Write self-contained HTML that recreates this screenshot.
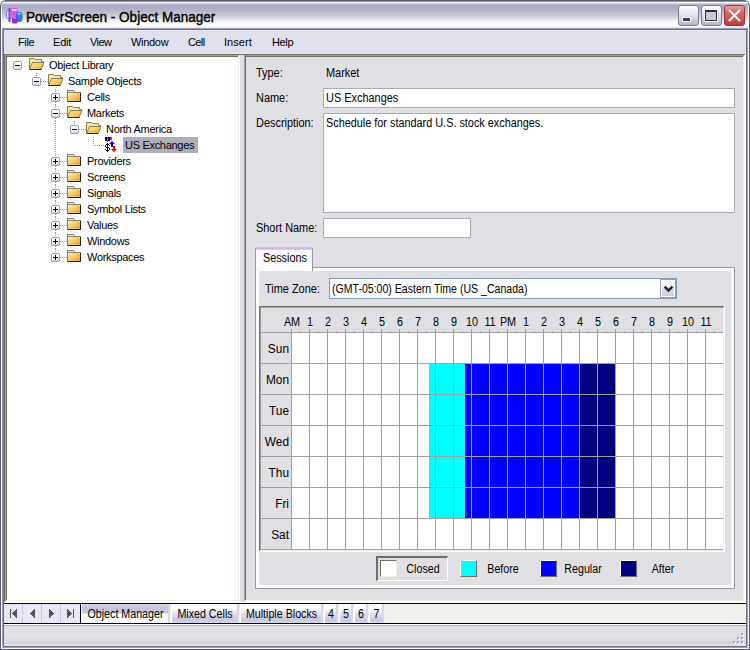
<!DOCTYPE html>
<html><head><meta charset="utf-8"><style>
html,body{margin:0;padding:0;width:750px;height:650px;overflow:hidden;background:#e0dfe3}
#w{position:relative;width:750px;height:650px;overflow:hidden}
#w div{position:absolute}
.t{font-family:"Liberation Sans",sans-serif;white-space:pre;color:#000}
</style></head><body><div id="w">
<svg width="0" height="0" style="position:absolute"><defs>
<linearGradient id="bx" x1="0" y1="0" x2="0" y2="1"><stop offset="0" stop-color="#ffffff"/><stop offset="0.55" stop-color="#f6f6fa"/><stop offset="1" stop-color="#d0d4e2"/></linearGradient>
<linearGradient id="fo" x1="0" y1="0" x2="1" y2="1"><stop offset="0" stop-color="#fff0a0"/><stop offset="1" stop-color="#e8a828"/></linearGradient>
<linearGradient id="fc" x1="0" y1="0" x2="1" y2="1"><stop offset="0" stop-color="#fff4b0"/><stop offset="1" stop-color="#e8a020"/></linearGradient>
</defs></svg>
<div style="left:0px;top:0px;width:750px;height:650px;background:#ffffff;"></div>
<div style="left:0px;top:0px;width:750px;height:650px;background:#5c5c78;border-radius:6px 6px 0 0"></div>
<div style="left:1px;top:1px;width:748px;height:649px;background:#ffffff;border-radius:5px 5px 0 0"></div>
<div style="left:1px;top:1px;width:748px;height:29px;background:linear-gradient(#9090a8 0px,#9090a8 1px,#ffffff 1px,#ffffff 2px,#e0e0e8 2px,#c0c0d4 3px,#b0b0c8 4px,#a9a9c4 5px,#b0b0c8 8px,#bcbccc 11px,#c8c8d4 14px,#dadae2 17px,#ececf2 19px,#f6f6f9 21px,#ffffff 24px,#ffffff 26px,#ececec 26px,#ececec 27px,#a0a0b8 27px,#a0a0b8 28px,#6c6c88 28px,#6c6c88 29px);border-radius:5px 5px 0 0"></div>
<svg style="position:absolute;left:5px;top:6px" width="18" height="18" viewBox="0 0 18 18" shape-rendering="crispEdges"><g shape-rendering="geometricPrecision">
<rect x="1.5" y="4.5" width="5" height="8" rx="1.5" fill="#ece4fc" stroke="#9878d8"/>
<rect x="3.5" y="2" width="2" height="14" fill="#6848e0"/>
<rect x="6" y="2" width="7" height="8.5" rx="2" fill="#e850e8"/>
<rect x="7" y="3" width="5" height="2" rx="1" fill="#fcc8fc"/>
<rect x="11.5" y="6.5" width="5.5" height="9" rx="2" fill="#2888e8" stroke="#1868c8" stroke-width="0.8"/>
<rect x="12.5" y="7" width="3.5" height="1.5" rx="0.7" fill="#90d0ff"/>
<rect x="7" y="10.5" width="5.5" height="7" rx="1.5" fill="#9028d0"/>
<rect x="8" y="11" width="3" height="1.5" fill="#d090f8"/>
</g></svg>
<div class="t" style="left:26px;top:10px;font-size:14px;line-height:15px;color:#000;font-weight:400;letter-spacing:0px;-webkit-text-stroke:0.4px #000;transform:scaleX(0.965);transform-origin:0 0">PowerScreen - Object Manager</div>
<div style="left:678px;top:5px;width:21px;height:21px;background:linear-gradient(#fdfdff,#e6e6f0 40%,#c4c4d8 85%,#b4b4cc);border:1px solid #7d7d9e;border-radius:3px;box-sizing:border-box"></div>
<div style="left:701px;top:5px;width:21px;height:21px;background:linear-gradient(#fdfdff,#e6e6f0 40%,#c4c4d8 85%,#b4b4cc);border:1px solid #7d7d9e;border-radius:3px;box-sizing:border-box"></div>
<div style="left:683px;top:18px;width:7px;height:3px;background:#3c3c58;outline:1px solid #fff"></div>
<div style="left:705px;top:10px;width:12px;height:11px;border:1px solid #2c2c44;border-top-width:2px;box-sizing:border-box;background:#c8c8dc;outline:1px solid #fff"></div>
<div style="left:724px;top:5px;width:21px;height:21px;background:linear-gradient(#f0a0a0,#e06868 30%,#c84848 85%,#c03838);border:1px solid #a03030;border-radius:3px;box-sizing:border-box"></div>
<svg style="position:absolute;left:724px;top:5px" width="21" height="21" viewBox="0 0 21 21" shape-rendering="crispEdges"><path d="M5 5 L16 16 M16 5 L5 16" stroke="#fff" stroke-width="2" shape-rendering="geometricPrecision"/></svg>
<div style="left:1px;top:6px;width:1px;height:644px;background:#ffffff;"></div>
<div style="left:2px;top:28px;width:1px;height:618px;background:#9a9ab2;"></div>
<div style="left:3px;top:29px;width:1px;height:617px;background:#6e6e8c;"></div>
<div style="left:748px;top:6px;width:1px;height:644px;background:#ffffff;"></div>
<div style="left:747px;top:28px;width:1px;height:618px;background:#9a9ab2;"></div>
<div style="left:746px;top:29px;width:1px;height:617px;background:#6e6e8c;"></div>
<div style="left:0px;top:649px;width:750px;height:1px;background:#5c5c78;"></div>
<div style="left:1px;top:648px;width:748px;height:1px;background:#ffffff;"></div>
<div style="left:2px;top:647px;width:746px;height:1px;background:#9a9ab2;"></div>
<div style="left:3px;top:646px;width:744px;height:1px;background:#6e6e8c;"></div>
<div style="left:4px;top:30px;width:742px;height:24px;background:#dfe0ea;"></div>
<div style="left:4px;top:30px;width:742px;height:1px;background:#eaeaf6;"></div>
<div style="left:4px;top:30px;width:1px;height:24px;background:#eaeaf6;"></div>
<div style="left:4px;top:53px;width:742px;height:1px;background:#eaeaf6;"></div>
<div class="t" style="left:18px;top:36px;font-size:11px;line-height:13px;color:#000;font-weight:400;letter-spacing:-0.35px;">File</div>
<div class="t" style="left:53px;top:36px;font-size:11px;line-height:13px;color:#000;font-weight:400;letter-spacing:-0.2px;">Edit</div>
<div class="t" style="left:90px;top:36px;font-size:11px;line-height:13px;color:#000;font-weight:400;letter-spacing:-0.55px;">View</div>
<div class="t" style="left:131px;top:36px;font-size:11px;line-height:13px;color:#000;font-weight:400;letter-spacing:-0.3px;">Window</div>
<div class="t" style="left:188px;top:36px;font-size:11px;line-height:13px;color:#000;font-weight:400;letter-spacing:-0.6px;">Cell</div>
<div class="t" style="left:224px;top:36px;font-size:11px;line-height:13px;color:#000;font-weight:400;letter-spacing:0.05px;">Insert</div>
<div class="t" style="left:272px;top:36px;font-size:11px;line-height:13px;color:#000;font-weight:400;letter-spacing:-0.35px;">Help</div>
<div style="left:4px;top:54px;width:236px;height:548px;background:#716f64;"></div>
<div style="left:5px;top:55px;width:234px;height:546px;background:#a0a0a4;"></div>
<div style="left:6px;top:56px;width:233px;height:545px;background:#716f64;"></div>
<div style="left:7px;top:57px;width:232px;height:544px;background:#ffffff;"></div>
<div style="left:238px;top:56px;width:1px;height:545px;background:#f1efe2;"></div>
<div style="left:6px;top:600px;width:233px;height:1px;background:#f1efe2;"></div>
<div style="left:239px;top:55px;width:1px;height:547px;background:#ffffff;"></div>
<div style="left:5px;top:601px;width:235px;height:1px;background:#ffffff;"></div>
<div style="left:240px;top:54px;width:4px;height:548px;background:#e0dfe3;"></div>
<div style="left:4px;top:54px;width:742px;height:1px;background:#716f64;"></div>
<div style="left:244px;top:54px;width:502px;height:548px;background:#e0dfe3;"></div>
<div style="left:244px;top:54px;width:502px;height:1px;background:#716f64;"></div>
<div style="left:244px;top:55px;width:1px;height:547px;background:#a0a0a4;"></div>
<div style="left:245px;top:55px;width:500px;height:1px;background:#a0a0a4;"></div>
<div style="left:245px;top:55px;width:1px;height:547px;background:#716f64;"></div>
<div style="left:246px;top:56px;width:499px;height:1px;background:#716f64;"></div>
<div style="left:745px;top:54px;width:1px;height:548px;background:#ffffff;"></div>
<div style="left:744px;top:55px;width:1px;height:547px;background:#ffffff;"></div>
<div style="left:743px;top:56px;width:1px;height:546px;background:#f1efe2;"></div>
<div style="left:244px;top:601px;width:502px;height:1px;background:#ffffff;"></div>
<div style="left:245px;top:600px;width:500px;height:1px;background:#f1efe2;"></div>
<div style="left:4px;top:602px;width:742px;height:1px;background:#ffffff;"></div>
<div style="left:36px;top:73px;width:1px;height:1px;background:#a0a0a0;"></div>
<div style="left:36px;top:75px;width:1px;height:1px;background:#a0a0a0;"></div>
<div style="left:55px;top:89px;width:1px;height:1px;background:#a0a0a0;"></div>
<div style="left:55px;top:91px;width:1px;height:1px;background:#a0a0a0;"></div>
<div style="left:55px;top:102px;width:1px;height:1px;background:#a0a0a0;"></div>
<div style="left:55px;top:104px;width:1px;height:1px;background:#a0a0a0;"></div>
<div style="left:55px;top:105px;width:1px;height:1px;background:#a0a0a0;"></div>
<div style="left:55px;top:107px;width:1px;height:1px;background:#a0a0a0;"></div>
<div style="left:55px;top:118px;width:1px;height:1px;background:#a0a0a0;"></div>
<div style="left:55px;top:120px;width:1px;height:1px;background:#a0a0a0;"></div>
<div style="left:55px;top:121px;width:1px;height:1px;background:#a0a0a0;"></div>
<div style="left:55px;top:123px;width:1px;height:1px;background:#a0a0a0;"></div>
<div style="left:55px;top:125px;width:1px;height:1px;background:#a0a0a0;"></div>
<div style="left:55px;top:127px;width:1px;height:1px;background:#a0a0a0;"></div>
<div style="left:55px;top:129px;width:1px;height:1px;background:#a0a0a0;"></div>
<div style="left:55px;top:131px;width:1px;height:1px;background:#a0a0a0;"></div>
<div style="left:55px;top:133px;width:1px;height:1px;background:#a0a0a0;"></div>
<div style="left:55px;top:135px;width:1px;height:1px;background:#a0a0a0;"></div>
<div style="left:55px;top:137px;width:1px;height:1px;background:#a0a0a0;"></div>
<div style="left:55px;top:139px;width:1px;height:1px;background:#a0a0a0;"></div>
<div style="left:55px;top:141px;width:1px;height:1px;background:#a0a0a0;"></div>
<div style="left:55px;top:143px;width:1px;height:1px;background:#a0a0a0;"></div>
<div style="left:55px;top:145px;width:1px;height:1px;background:#a0a0a0;"></div>
<div style="left:55px;top:147px;width:1px;height:1px;background:#a0a0a0;"></div>
<div style="left:55px;top:149px;width:1px;height:1px;background:#a0a0a0;"></div>
<div style="left:55px;top:151px;width:1px;height:1px;background:#a0a0a0;"></div>
<div style="left:55px;top:153px;width:1px;height:1px;background:#a0a0a0;"></div>
<div style="left:55px;top:155px;width:1px;height:1px;background:#a0a0a0;"></div>
<div style="left:55px;top:166px;width:1px;height:1px;background:#a0a0a0;"></div>
<div style="left:55px;top:168px;width:1px;height:1px;background:#a0a0a0;"></div>
<div style="left:55px;top:169px;width:1px;height:1px;background:#a0a0a0;"></div>
<div style="left:55px;top:171px;width:1px;height:1px;background:#a0a0a0;"></div>
<div style="left:55px;top:182px;width:1px;height:1px;background:#a0a0a0;"></div>
<div style="left:55px;top:184px;width:1px;height:1px;background:#a0a0a0;"></div>
<div style="left:55px;top:185px;width:1px;height:1px;background:#a0a0a0;"></div>
<div style="left:55px;top:187px;width:1px;height:1px;background:#a0a0a0;"></div>
<div style="left:55px;top:198px;width:1px;height:1px;background:#a0a0a0;"></div>
<div style="left:55px;top:200px;width:1px;height:1px;background:#a0a0a0;"></div>
<div style="left:55px;top:201px;width:1px;height:1px;background:#a0a0a0;"></div>
<div style="left:55px;top:203px;width:1px;height:1px;background:#a0a0a0;"></div>
<div style="left:55px;top:214px;width:1px;height:1px;background:#a0a0a0;"></div>
<div style="left:55px;top:216px;width:1px;height:1px;background:#a0a0a0;"></div>
<div style="left:55px;top:217px;width:1px;height:1px;background:#a0a0a0;"></div>
<div style="left:55px;top:219px;width:1px;height:1px;background:#a0a0a0;"></div>
<div style="left:55px;top:230px;width:1px;height:1px;background:#a0a0a0;"></div>
<div style="left:55px;top:232px;width:1px;height:1px;background:#a0a0a0;"></div>
<div style="left:55px;top:233px;width:1px;height:1px;background:#a0a0a0;"></div>
<div style="left:55px;top:235px;width:1px;height:1px;background:#a0a0a0;"></div>
<div style="left:55px;top:246px;width:1px;height:1px;background:#a0a0a0;"></div>
<div style="left:55px;top:248px;width:1px;height:1px;background:#a0a0a0;"></div>
<div style="left:55px;top:249px;width:1px;height:1px;background:#a0a0a0;"></div>
<div style="left:55px;top:251px;width:1px;height:1px;background:#a0a0a0;"></div>
<div style="left:74px;top:121px;width:1px;height:1px;background:#a0a0a0;"></div>
<div style="left:74px;top:123px;width:1px;height:1px;background:#a0a0a0;"></div>
<div style="left:93px;top:137px;width:1px;height:1px;background:#a0a0a0;"></div>
<div style="left:93px;top:139px;width:1px;height:1px;background:#a0a0a0;"></div>
<div style="left:93px;top:141px;width:1px;height:1px;background:#a0a0a0;"></div>
<div style="left:93px;top:143px;width:1px;height:1px;background:#a0a0a0;"></div>
<div style="left:93px;top:145px;width:1px;height:1px;background:#a0a0a0;"></div>
<svg style="position:absolute;left:13px;top:61px" width="9" height="9" viewBox="0 0 9 9" shape-rendering="crispEdges"><rect x="1" y="1" width="7" height="7" fill="url(#bx)"/><rect x="1" y="0" width="7" height="1" fill="#9a9eb2"/><rect x="1" y="8" width="7" height="1" fill="#9a9eb2"/><rect x="0" y="1" width="1" height="7" fill="#9a9eb2"/><rect x="8" y="1" width="1" height="7" fill="#9a9eb2"/><rect x="2" y="4" width="5" height="1" fill="#000"/></svg>
<svg style="position:absolute;left:29px;top:57px" width="16" height="14" viewBox="0 0 16 14" shape-rendering="crispEdges"><path d="M0.5 1.5 h5 l1 1 h6 v2 h2 l-3 8 h-11 z" fill="#f8e8a0" stroke="#8c7c58" shape-rendering="geometricPrecision"/>
<path d="M3.5 5.5 h11.5 l-3 7 h-11.5 z" fill="url(#fo)" stroke="#8c7c58" shape-rendering="geometricPrecision"/>
<path d="M1 12.5 h11.5" stroke="#302818" shape-rendering="geometricPrecision"/></svg>
<div class="t" style="left:49px;top:59px;font-size:11px;line-height:13px;color:#000;font-weight:400;letter-spacing:-0.3px;">Object Library</div>
<div style="left:41px;top:81px;width:1px;height:1px;background:#a0a0a0;"></div>
<div style="left:43px;top:81px;width:1px;height:1px;background:#a0a0a0;"></div>
<div style="left:45px;top:81px;width:1px;height:1px;background:#a0a0a0;"></div>
<div style="left:47px;top:81px;width:1px;height:1px;background:#a0a0a0;"></div>
<svg style="position:absolute;left:32px;top:77px" width="9" height="9" viewBox="0 0 9 9" shape-rendering="crispEdges"><rect x="1" y="1" width="7" height="7" fill="url(#bx)"/><rect x="1" y="0" width="7" height="1" fill="#9a9eb2"/><rect x="1" y="8" width="7" height="1" fill="#9a9eb2"/><rect x="0" y="1" width="1" height="7" fill="#9a9eb2"/><rect x="8" y="1" width="1" height="7" fill="#9a9eb2"/><rect x="2" y="4" width="5" height="1" fill="#000"/></svg>
<svg style="position:absolute;left:48px;top:73px" width="16" height="14" viewBox="0 0 16 14" shape-rendering="crispEdges"><path d="M0.5 1.5 h5 l1 1 h6 v2 h2 l-3 8 h-11 z" fill="#f8e8a0" stroke="#8c7c58" shape-rendering="geometricPrecision"/>
<path d="M3.5 5.5 h11.5 l-3 7 h-11.5 z" fill="url(#fo)" stroke="#8c7c58" shape-rendering="geometricPrecision"/>
<path d="M1 12.5 h11.5" stroke="#302818" shape-rendering="geometricPrecision"/></svg>
<div class="t" style="left:68px;top:75px;font-size:11px;line-height:13px;color:#000;font-weight:400;letter-spacing:-0.3px;">Sample Objects</div>
<div style="left:60px;top:97px;width:1px;height:1px;background:#a0a0a0;"></div>
<div style="left:62px;top:97px;width:1px;height:1px;background:#a0a0a0;"></div>
<div style="left:64px;top:97px;width:1px;height:1px;background:#a0a0a0;"></div>
<div style="left:66px;top:97px;width:1px;height:1px;background:#a0a0a0;"></div>
<svg style="position:absolute;left:51px;top:93px" width="9" height="9" viewBox="0 0 9 9" shape-rendering="crispEdges"><rect x="1" y="1" width="7" height="7" fill="url(#bx)"/><rect x="1" y="0" width="7" height="1" fill="#9a9eb2"/><rect x="1" y="8" width="7" height="1" fill="#9a9eb2"/><rect x="0" y="1" width="1" height="7" fill="#9a9eb2"/><rect x="8" y="1" width="1" height="7" fill="#9a9eb2"/><rect x="2" y="4" width="5" height="1" fill="#000"/><rect x="4" y="2" width="1" height="5" fill="#000"/></svg>
<svg style="position:absolute;left:67px;top:90px" width="14" height="12" viewBox="0 0 14 12" shape-rendering="crispEdges"><rect x="0" y="0" width="7" height="1" fill="#8a7e68"/><rect x="0" y="1" width="1" height="11" fill="#8a7e68"/>
<rect x="1" y="1" width="6" height="1" fill="#fff0a8"/><rect x="7" y="1" width="1" height="1" fill="#8a7e68"/>
<rect x="1" y="2" width="13" height="1" fill="#8a7e68"/><rect x="1" y="3" width="12" height="8" fill="url(#fc)"/>
<rect x="13" y="3" width="1" height="9" fill="#2c2418"/><rect x="1" y="11" width="13" height="1" fill="#2c2418"/></svg>
<div class="t" style="left:87px;top:91px;font-size:11px;line-height:13px;color:#000;font-weight:400;letter-spacing:-0.3px;">Cells</div>
<div style="left:60px;top:113px;width:1px;height:1px;background:#a0a0a0;"></div>
<div style="left:62px;top:113px;width:1px;height:1px;background:#a0a0a0;"></div>
<div style="left:64px;top:113px;width:1px;height:1px;background:#a0a0a0;"></div>
<div style="left:66px;top:113px;width:1px;height:1px;background:#a0a0a0;"></div>
<svg style="position:absolute;left:51px;top:109px" width="9" height="9" viewBox="0 0 9 9" shape-rendering="crispEdges"><rect x="1" y="1" width="7" height="7" fill="url(#bx)"/><rect x="1" y="0" width="7" height="1" fill="#9a9eb2"/><rect x="1" y="8" width="7" height="1" fill="#9a9eb2"/><rect x="0" y="1" width="1" height="7" fill="#9a9eb2"/><rect x="8" y="1" width="1" height="7" fill="#9a9eb2"/><rect x="2" y="4" width="5" height="1" fill="#000"/></svg>
<svg style="position:absolute;left:67px;top:105px" width="16" height="14" viewBox="0 0 16 14" shape-rendering="crispEdges"><path d="M0.5 1.5 h5 l1 1 h6 v2 h2 l-3 8 h-11 z" fill="#f8e8a0" stroke="#8c7c58" shape-rendering="geometricPrecision"/>
<path d="M3.5 5.5 h11.5 l-3 7 h-11.5 z" fill="url(#fo)" stroke="#8c7c58" shape-rendering="geometricPrecision"/>
<path d="M1 12.5 h11.5" stroke="#302818" shape-rendering="geometricPrecision"/></svg>
<div class="t" style="left:87px;top:107px;font-size:11px;line-height:13px;color:#000;font-weight:400;letter-spacing:-0.3px;">Markets</div>
<div style="left:79px;top:129px;width:1px;height:1px;background:#a0a0a0;"></div>
<div style="left:81px;top:129px;width:1px;height:1px;background:#a0a0a0;"></div>
<div style="left:83px;top:129px;width:1px;height:1px;background:#a0a0a0;"></div>
<div style="left:85px;top:129px;width:1px;height:1px;background:#a0a0a0;"></div>
<svg style="position:absolute;left:70px;top:125px" width="9" height="9" viewBox="0 0 9 9" shape-rendering="crispEdges"><rect x="1" y="1" width="7" height="7" fill="url(#bx)"/><rect x="1" y="0" width="7" height="1" fill="#9a9eb2"/><rect x="1" y="8" width="7" height="1" fill="#9a9eb2"/><rect x="0" y="1" width="1" height="7" fill="#9a9eb2"/><rect x="8" y="1" width="1" height="7" fill="#9a9eb2"/><rect x="2" y="4" width="5" height="1" fill="#000"/></svg>
<svg style="position:absolute;left:86px;top:121px" width="16" height="14" viewBox="0 0 16 14" shape-rendering="crispEdges"><path d="M0.5 1.5 h5 l1 1 h6 v2 h2 l-3 8 h-11 z" fill="#f8e8a0" stroke="#8c7c58" shape-rendering="geometricPrecision"/>
<path d="M3.5 5.5 h11.5 l-3 7 h-11.5 z" fill="url(#fo)" stroke="#8c7c58" shape-rendering="geometricPrecision"/>
<path d="M1 12.5 h11.5" stroke="#302818" shape-rendering="geometricPrecision"/></svg>
<div class="t" style="left:106px;top:123px;font-size:11px;line-height:13px;color:#000;font-weight:400;letter-spacing:-0.3px;">North America</div>
<div style="left:95px;top:145px;width:1px;height:1px;background:#a0a0a0;"></div>
<div style="left:97px;top:145px;width:1px;height:1px;background:#a0a0a0;"></div>
<div style="left:99px;top:145px;width:1px;height:1px;background:#a0a0a0;"></div>
<div style="left:101px;top:145px;width:1px;height:1px;background:#a0a0a0;"></div>
<div style="left:103px;top:145px;width:1px;height:1px;background:#a0a0a0;"></div>
<svg style="position:absolute;left:105px;top:137px" width="12" height="16" viewBox="0 0 12 16" shape-rendering="crispEdges">
<rect x="0" y="0" width="2" height="4" fill="#000080"/><rect x="2" y="0" width="1" height="5" fill="#1070e0"/>
<rect x="3" y="0" width="2" height="4" fill="#000080"/><rect x="5" y="0" width="2" height="3" fill="#ff0080"/>
<path d="M7 4 L10 7 L8 7 L8 10 L6 10 L6 7 L4 7 Z" fill="#0000ff" shape-rendering="geometricPrecision"/>
<path d="M8 9 L10 9 L10 12 L12 12 L9 15 L6 12 L8 12 Z" fill="#ff0000" shape-rendering="geometricPrecision"/>
<rect x="2" y="6" width="1" height="9" fill="#000"/><rect x="1" y="7" width="3" height="1" fill="#000"/><rect x="0" y="8" width="1" height="2" fill="#000"/><rect x="4" y="8" width="1" height="1" fill="#000"/><rect x="1" y="10" width="3" height="1" fill="#000"/><rect x="4" y="11" width="1" height="2" fill="#000"/><rect x="0" y="12" width="1" height="1" fill="#000"/><rect x="1" y="13" width="3" height="1" fill="#000"/></svg>
<div style="left:123px;top:137px;width:75px;height:16px;background:#adaebb;"></div>
<div class="t" style="left:125px;top:139px;font-size:11px;line-height:13px;color:#000;font-weight:400;letter-spacing:-0.3px;">US Exchanges</div>
<div style="left:60px;top:161px;width:1px;height:1px;background:#a0a0a0;"></div>
<div style="left:62px;top:161px;width:1px;height:1px;background:#a0a0a0;"></div>
<div style="left:64px;top:161px;width:1px;height:1px;background:#a0a0a0;"></div>
<div style="left:66px;top:161px;width:1px;height:1px;background:#a0a0a0;"></div>
<svg style="position:absolute;left:51px;top:157px" width="9" height="9" viewBox="0 0 9 9" shape-rendering="crispEdges"><rect x="1" y="1" width="7" height="7" fill="url(#bx)"/><rect x="1" y="0" width="7" height="1" fill="#9a9eb2"/><rect x="1" y="8" width="7" height="1" fill="#9a9eb2"/><rect x="0" y="1" width="1" height="7" fill="#9a9eb2"/><rect x="8" y="1" width="1" height="7" fill="#9a9eb2"/><rect x="2" y="4" width="5" height="1" fill="#000"/><rect x="4" y="2" width="1" height="5" fill="#000"/></svg>
<svg style="position:absolute;left:67px;top:154px" width="14" height="12" viewBox="0 0 14 12" shape-rendering="crispEdges"><rect x="0" y="0" width="7" height="1" fill="#8a7e68"/><rect x="0" y="1" width="1" height="11" fill="#8a7e68"/>
<rect x="1" y="1" width="6" height="1" fill="#fff0a8"/><rect x="7" y="1" width="1" height="1" fill="#8a7e68"/>
<rect x="1" y="2" width="13" height="1" fill="#8a7e68"/><rect x="1" y="3" width="12" height="8" fill="url(#fc)"/>
<rect x="13" y="3" width="1" height="9" fill="#2c2418"/><rect x="1" y="11" width="13" height="1" fill="#2c2418"/></svg>
<div class="t" style="left:87px;top:155px;font-size:11px;line-height:13px;color:#000;font-weight:400;letter-spacing:-0.3px;">Providers</div>
<div style="left:60px;top:177px;width:1px;height:1px;background:#a0a0a0;"></div>
<div style="left:62px;top:177px;width:1px;height:1px;background:#a0a0a0;"></div>
<div style="left:64px;top:177px;width:1px;height:1px;background:#a0a0a0;"></div>
<div style="left:66px;top:177px;width:1px;height:1px;background:#a0a0a0;"></div>
<svg style="position:absolute;left:51px;top:173px" width="9" height="9" viewBox="0 0 9 9" shape-rendering="crispEdges"><rect x="1" y="1" width="7" height="7" fill="url(#bx)"/><rect x="1" y="0" width="7" height="1" fill="#9a9eb2"/><rect x="1" y="8" width="7" height="1" fill="#9a9eb2"/><rect x="0" y="1" width="1" height="7" fill="#9a9eb2"/><rect x="8" y="1" width="1" height="7" fill="#9a9eb2"/><rect x="2" y="4" width="5" height="1" fill="#000"/><rect x="4" y="2" width="1" height="5" fill="#000"/></svg>
<svg style="position:absolute;left:67px;top:170px" width="14" height="12" viewBox="0 0 14 12" shape-rendering="crispEdges"><rect x="0" y="0" width="7" height="1" fill="#8a7e68"/><rect x="0" y="1" width="1" height="11" fill="#8a7e68"/>
<rect x="1" y="1" width="6" height="1" fill="#fff0a8"/><rect x="7" y="1" width="1" height="1" fill="#8a7e68"/>
<rect x="1" y="2" width="13" height="1" fill="#8a7e68"/><rect x="1" y="3" width="12" height="8" fill="url(#fc)"/>
<rect x="13" y="3" width="1" height="9" fill="#2c2418"/><rect x="1" y="11" width="13" height="1" fill="#2c2418"/></svg>
<div class="t" style="left:87px;top:171px;font-size:11px;line-height:13px;color:#000;font-weight:400;letter-spacing:-0.3px;">Screens</div>
<div style="left:60px;top:193px;width:1px;height:1px;background:#a0a0a0;"></div>
<div style="left:62px;top:193px;width:1px;height:1px;background:#a0a0a0;"></div>
<div style="left:64px;top:193px;width:1px;height:1px;background:#a0a0a0;"></div>
<div style="left:66px;top:193px;width:1px;height:1px;background:#a0a0a0;"></div>
<svg style="position:absolute;left:51px;top:189px" width="9" height="9" viewBox="0 0 9 9" shape-rendering="crispEdges"><rect x="1" y="1" width="7" height="7" fill="url(#bx)"/><rect x="1" y="0" width="7" height="1" fill="#9a9eb2"/><rect x="1" y="8" width="7" height="1" fill="#9a9eb2"/><rect x="0" y="1" width="1" height="7" fill="#9a9eb2"/><rect x="8" y="1" width="1" height="7" fill="#9a9eb2"/><rect x="2" y="4" width="5" height="1" fill="#000"/><rect x="4" y="2" width="1" height="5" fill="#000"/></svg>
<svg style="position:absolute;left:67px;top:186px" width="14" height="12" viewBox="0 0 14 12" shape-rendering="crispEdges"><rect x="0" y="0" width="7" height="1" fill="#8a7e68"/><rect x="0" y="1" width="1" height="11" fill="#8a7e68"/>
<rect x="1" y="1" width="6" height="1" fill="#fff0a8"/><rect x="7" y="1" width="1" height="1" fill="#8a7e68"/>
<rect x="1" y="2" width="13" height="1" fill="#8a7e68"/><rect x="1" y="3" width="12" height="8" fill="url(#fc)"/>
<rect x="13" y="3" width="1" height="9" fill="#2c2418"/><rect x="1" y="11" width="13" height="1" fill="#2c2418"/></svg>
<div class="t" style="left:87px;top:187px;font-size:11px;line-height:13px;color:#000;font-weight:400;letter-spacing:-0.3px;">Signals</div>
<div style="left:60px;top:209px;width:1px;height:1px;background:#a0a0a0;"></div>
<div style="left:62px;top:209px;width:1px;height:1px;background:#a0a0a0;"></div>
<div style="left:64px;top:209px;width:1px;height:1px;background:#a0a0a0;"></div>
<div style="left:66px;top:209px;width:1px;height:1px;background:#a0a0a0;"></div>
<svg style="position:absolute;left:51px;top:205px" width="9" height="9" viewBox="0 0 9 9" shape-rendering="crispEdges"><rect x="1" y="1" width="7" height="7" fill="url(#bx)"/><rect x="1" y="0" width="7" height="1" fill="#9a9eb2"/><rect x="1" y="8" width="7" height="1" fill="#9a9eb2"/><rect x="0" y="1" width="1" height="7" fill="#9a9eb2"/><rect x="8" y="1" width="1" height="7" fill="#9a9eb2"/><rect x="2" y="4" width="5" height="1" fill="#000"/><rect x="4" y="2" width="1" height="5" fill="#000"/></svg>
<svg style="position:absolute;left:67px;top:202px" width="14" height="12" viewBox="0 0 14 12" shape-rendering="crispEdges"><rect x="0" y="0" width="7" height="1" fill="#8a7e68"/><rect x="0" y="1" width="1" height="11" fill="#8a7e68"/>
<rect x="1" y="1" width="6" height="1" fill="#fff0a8"/><rect x="7" y="1" width="1" height="1" fill="#8a7e68"/>
<rect x="1" y="2" width="13" height="1" fill="#8a7e68"/><rect x="1" y="3" width="12" height="8" fill="url(#fc)"/>
<rect x="13" y="3" width="1" height="9" fill="#2c2418"/><rect x="1" y="11" width="13" height="1" fill="#2c2418"/></svg>
<div class="t" style="left:87px;top:203px;font-size:11px;line-height:13px;color:#000;font-weight:400;letter-spacing:-0.3px;">Symbol Lists</div>
<div style="left:60px;top:225px;width:1px;height:1px;background:#a0a0a0;"></div>
<div style="left:62px;top:225px;width:1px;height:1px;background:#a0a0a0;"></div>
<div style="left:64px;top:225px;width:1px;height:1px;background:#a0a0a0;"></div>
<div style="left:66px;top:225px;width:1px;height:1px;background:#a0a0a0;"></div>
<svg style="position:absolute;left:51px;top:221px" width="9" height="9" viewBox="0 0 9 9" shape-rendering="crispEdges"><rect x="1" y="1" width="7" height="7" fill="url(#bx)"/><rect x="1" y="0" width="7" height="1" fill="#9a9eb2"/><rect x="1" y="8" width="7" height="1" fill="#9a9eb2"/><rect x="0" y="1" width="1" height="7" fill="#9a9eb2"/><rect x="8" y="1" width="1" height="7" fill="#9a9eb2"/><rect x="2" y="4" width="5" height="1" fill="#000"/><rect x="4" y="2" width="1" height="5" fill="#000"/></svg>
<svg style="position:absolute;left:67px;top:218px" width="14" height="12" viewBox="0 0 14 12" shape-rendering="crispEdges"><rect x="0" y="0" width="7" height="1" fill="#8a7e68"/><rect x="0" y="1" width="1" height="11" fill="#8a7e68"/>
<rect x="1" y="1" width="6" height="1" fill="#fff0a8"/><rect x="7" y="1" width="1" height="1" fill="#8a7e68"/>
<rect x="1" y="2" width="13" height="1" fill="#8a7e68"/><rect x="1" y="3" width="12" height="8" fill="url(#fc)"/>
<rect x="13" y="3" width="1" height="9" fill="#2c2418"/><rect x="1" y="11" width="13" height="1" fill="#2c2418"/></svg>
<div class="t" style="left:87px;top:219px;font-size:11px;line-height:13px;color:#000;font-weight:400;letter-spacing:-0.3px;">Values</div>
<div style="left:60px;top:241px;width:1px;height:1px;background:#a0a0a0;"></div>
<div style="left:62px;top:241px;width:1px;height:1px;background:#a0a0a0;"></div>
<div style="left:64px;top:241px;width:1px;height:1px;background:#a0a0a0;"></div>
<div style="left:66px;top:241px;width:1px;height:1px;background:#a0a0a0;"></div>
<svg style="position:absolute;left:51px;top:237px" width="9" height="9" viewBox="0 0 9 9" shape-rendering="crispEdges"><rect x="1" y="1" width="7" height="7" fill="url(#bx)"/><rect x="1" y="0" width="7" height="1" fill="#9a9eb2"/><rect x="1" y="8" width="7" height="1" fill="#9a9eb2"/><rect x="0" y="1" width="1" height="7" fill="#9a9eb2"/><rect x="8" y="1" width="1" height="7" fill="#9a9eb2"/><rect x="2" y="4" width="5" height="1" fill="#000"/><rect x="4" y="2" width="1" height="5" fill="#000"/></svg>
<svg style="position:absolute;left:67px;top:234px" width="14" height="12" viewBox="0 0 14 12" shape-rendering="crispEdges"><rect x="0" y="0" width="7" height="1" fill="#8a7e68"/><rect x="0" y="1" width="1" height="11" fill="#8a7e68"/>
<rect x="1" y="1" width="6" height="1" fill="#fff0a8"/><rect x="7" y="1" width="1" height="1" fill="#8a7e68"/>
<rect x="1" y="2" width="13" height="1" fill="#8a7e68"/><rect x="1" y="3" width="12" height="8" fill="url(#fc)"/>
<rect x="13" y="3" width="1" height="9" fill="#2c2418"/><rect x="1" y="11" width="13" height="1" fill="#2c2418"/></svg>
<div class="t" style="left:87px;top:235px;font-size:11px;line-height:13px;color:#000;font-weight:400;letter-spacing:-0.3px;">Windows</div>
<div style="left:60px;top:257px;width:1px;height:1px;background:#a0a0a0;"></div>
<div style="left:62px;top:257px;width:1px;height:1px;background:#a0a0a0;"></div>
<div style="left:64px;top:257px;width:1px;height:1px;background:#a0a0a0;"></div>
<div style="left:66px;top:257px;width:1px;height:1px;background:#a0a0a0;"></div>
<svg style="position:absolute;left:51px;top:253px" width="9" height="9" viewBox="0 0 9 9" shape-rendering="crispEdges"><rect x="1" y="1" width="7" height="7" fill="url(#bx)"/><rect x="1" y="0" width="7" height="1" fill="#9a9eb2"/><rect x="1" y="8" width="7" height="1" fill="#9a9eb2"/><rect x="0" y="1" width="1" height="7" fill="#9a9eb2"/><rect x="8" y="1" width="1" height="7" fill="#9a9eb2"/><rect x="2" y="4" width="5" height="1" fill="#000"/><rect x="4" y="2" width="1" height="5" fill="#000"/></svg>
<svg style="position:absolute;left:67px;top:250px" width="14" height="12" viewBox="0 0 14 12" shape-rendering="crispEdges"><rect x="0" y="0" width="7" height="1" fill="#8a7e68"/><rect x="0" y="1" width="1" height="11" fill="#8a7e68"/>
<rect x="1" y="1" width="6" height="1" fill="#fff0a8"/><rect x="7" y="1" width="1" height="1" fill="#8a7e68"/>
<rect x="1" y="2" width="13" height="1" fill="#8a7e68"/><rect x="1" y="3" width="12" height="8" fill="url(#fc)"/>
<rect x="13" y="3" width="1" height="9" fill="#2c2418"/><rect x="1" y="11" width="13" height="1" fill="#2c2418"/></svg>
<div class="t" style="left:87px;top:251px;font-size:11px;line-height:13px;color:#000;font-weight:400;letter-spacing:-0.3px;">Workspaces</div>
<div class="t" style="left:256px;top:67px;font-size:12px;line-height:13px;transform:scaleX(0.91);transform-origin:0 0">Type:</div>
<div class="t" style="left:325.5px;top:67px;font-size:12px;line-height:13px;transform:scaleX(0.91);transform-origin:0 0">Market</div>
<div class="t" style="left:256px;top:92px;font-size:12px;line-height:13px;transform:scaleX(0.91);transform-origin:0 0">Name:</div>
<div style="left:323px;top:88px;width:412px;height:20px;background:#fff;border:1px solid #a5acb2;box-sizing:border-box"></div>
<div class="t" style="left:325.5px;top:92px;font-size:12px;line-height:13px;transform:scaleX(0.91);transform-origin:0 0">US Exchanges</div>
<div class="t" style="left:256px;top:117px;font-size:12px;line-height:13px;transform:scaleX(0.91);transform-origin:0 0">Description:</div>
<div style="left:323px;top:113px;width:412px;height:100px;background:#fff;border:1px solid #a5acb2;box-sizing:border-box"></div>
<div class="t" style="left:325.5px;top:117px;font-size:12px;line-height:13px;transform:scaleX(0.905);transform-origin:0 0">Schedule for standard U.S. stock exchanges.</div>
<div class="t" style="left:255.5px;top:222px;font-size:12px;line-height:13px;transform:scaleX(0.91);transform-origin:0 0">Short Name:</div>
<div style="left:323px;top:218px;width:148px;height:20px;background:#fff;border:1px solid #a5acb2;box-sizing:border-box"></div>
<div style="left:255px;top:267px;width:480px;height:322px;border:1px solid #919b9c;box-sizing:border-box;background:#fff"></div>
<div style="left:259px;top:271px;width:472px;height:314px;background:#e0dfe3;"></div>
<div style="left:255px;top:247px;width:58px;height:24px;border:1px solid #919b9c;border-bottom:none;border-radius:3px 3px 0 0;box-sizing:border-box;background:#fcfcfe"></div>
<div style="left:256px;top:247px;width:56px;height:3px;background:linear-gradient(#e6c8fa,#d4aaf6 40%,#e8d4fc);border-radius:2px 2px 0 0"></div>
<div style="left:256px;top:267px;width:56px;height:4px;background:#fcfcfe;"></div>
<div class="t" style="left:262.5px;top:252px;font-size:12px;line-height:13px;transform:scaleX(0.9);transform-origin:0 0">Sessions</div>
<div class="t" style="left:264.5px;top:283px;font-size:12px;line-height:13px;transform:scaleX(0.91);transform-origin:0 0">Time Zone:</div>
<div style="left:329px;top:278px;width:348px;height:21px;background:#fff;border:1px solid #7f9db9;box-sizing:border-box"></div>
<div class="t" style="left:332px;top:283px;font-size:12px;line-height:13px;transform:scaleX(0.88);transform-origin:0 0">(GMT-05:00) Eastern Time (US _Canada)</div>
<div style="left:660px;top:279px;width:16px;height:19px;background:linear-gradient(#ffffff 0px,#fafafc 3px,#dcdfea 8px,#cfd2e0 14px,#c8cbdc 17px);border:1px solid #9c9cae;box-shadow:inset 0 0 0 1px #fff;box-sizing:border-box"></div>
<svg style="position:absolute;left:660px;top:279px" width="16" height="19" viewBox="0 0 16 19" shape-rendering="crispEdges"><path d="M4.6 7.6 L8.5 11.5 L12.4 7.6" stroke="#202020" stroke-width="2.3" fill="none" shape-rendering="geometricPrecision"/></svg>
<div style="left:259px;top:306px;width:466px;height:246px;background:#e0dfe3;"></div>
<div style="left:259px;top:306px;width:465px;height:1px;background:#716f64;"></div>
<div style="left:259px;top:307px;width:464px;height:1px;background:#a0a0a4;"></div>
<div style="left:259px;top:306px;width:1px;height:246px;background:#716f64;"></div>
<div style="left:260px;top:307px;width:1px;height:244px;background:#a0a0a4;"></div>
<div style="left:724px;top:306px;width:1px;height:246px;background:#ffffff;"></div>
<div style="left:259px;top:551px;width:466px;height:1px;background:#ffffff;"></div>
<div style="left:723px;top:307px;width:1px;height:244px;background:#f1efe2;"></div>
<div style="left:260px;top:550px;width:464px;height:1px;background:#f1efe2;"></div>
<div style="left:292px;top:333px;width:431px;height:216px;background:#ffffff;"></div>
<div style="left:429px;top:364px;width:36px;height:154px;background:#00ffff;"></div>
<div style="left:465px;top:364px;width:114px;height:154px;background:#0000ff;"></div>
<div style="left:580px;top:364px;width:35px;height:154px;background:#000080;"></div>
<div style="left:291px;top:329px;width:1px;height:220px;background:#a0a0a0;"></div>
<div style="left:300px;top:331px;width:1px;height:1px;background:#a0a0a0;"></div>
<div style="left:309px;top:329px;width:1px;height:220px;background:#a0a0a0;"></div>
<div style="left:318px;top:331px;width:1px;height:1px;background:#a0a0a0;"></div>
<div style="left:327px;top:329px;width:1px;height:220px;background:#a0a0a0;"></div>
<div style="left:336px;top:331px;width:1px;height:1px;background:#a0a0a0;"></div>
<div style="left:345px;top:329px;width:1px;height:220px;background:#a0a0a0;"></div>
<div style="left:354px;top:331px;width:1px;height:1px;background:#a0a0a0;"></div>
<div style="left:363px;top:329px;width:1px;height:220px;background:#a0a0a0;"></div>
<div style="left:372px;top:331px;width:1px;height:1px;background:#a0a0a0;"></div>
<div style="left:381px;top:329px;width:1px;height:220px;background:#a0a0a0;"></div>
<div style="left:390px;top:331px;width:1px;height:1px;background:#a0a0a0;"></div>
<div style="left:399px;top:329px;width:1px;height:220px;background:#a0a0a0;"></div>
<div style="left:408px;top:331px;width:1px;height:1px;background:#a0a0a0;"></div>
<div style="left:417px;top:329px;width:1px;height:220px;background:#a0a0a0;"></div>
<div style="left:426px;top:331px;width:1px;height:1px;background:#a0a0a0;"></div>
<div style="left:435px;top:329px;width:1px;height:220px;background:#a0a0a0;"></div>
<div style="left:444px;top:331px;width:1px;height:1px;background:#a0a0a0;"></div>
<div style="left:453px;top:329px;width:1px;height:220px;background:#a0a0a0;"></div>
<div style="left:462px;top:331px;width:1px;height:1px;background:#a0a0a0;"></div>
<div style="left:471px;top:329px;width:1px;height:220px;background:#a0a0a0;"></div>
<div style="left:480px;top:331px;width:1px;height:1px;background:#a0a0a0;"></div>
<div style="left:489px;top:329px;width:1px;height:220px;background:#a0a0a0;"></div>
<div style="left:498px;top:331px;width:1px;height:1px;background:#a0a0a0;"></div>
<div style="left:507px;top:329px;width:1px;height:220px;background:#a0a0a0;"></div>
<div style="left:516px;top:331px;width:1px;height:1px;background:#a0a0a0;"></div>
<div style="left:525px;top:329px;width:1px;height:220px;background:#a0a0a0;"></div>
<div style="left:534px;top:331px;width:1px;height:1px;background:#a0a0a0;"></div>
<div style="left:543px;top:329px;width:1px;height:220px;background:#a0a0a0;"></div>
<div style="left:552px;top:331px;width:1px;height:1px;background:#a0a0a0;"></div>
<div style="left:561px;top:329px;width:1px;height:220px;background:#a0a0a0;"></div>
<div style="left:570px;top:331px;width:1px;height:1px;background:#a0a0a0;"></div>
<div style="left:579px;top:329px;width:1px;height:220px;background:#a0a0a0;"></div>
<div style="left:588px;top:331px;width:1px;height:1px;background:#a0a0a0;"></div>
<div style="left:597px;top:329px;width:1px;height:220px;background:#a0a0a0;"></div>
<div style="left:606px;top:331px;width:1px;height:1px;background:#a0a0a0;"></div>
<div style="left:615px;top:329px;width:1px;height:220px;background:#a0a0a0;"></div>
<div style="left:624px;top:331px;width:1px;height:1px;background:#a0a0a0;"></div>
<div style="left:633px;top:329px;width:1px;height:220px;background:#a0a0a0;"></div>
<div style="left:642px;top:331px;width:1px;height:1px;background:#a0a0a0;"></div>
<div style="left:651px;top:329px;width:1px;height:220px;background:#a0a0a0;"></div>
<div style="left:660px;top:331px;width:1px;height:1px;background:#a0a0a0;"></div>
<div style="left:669px;top:329px;width:1px;height:220px;background:#a0a0a0;"></div>
<div style="left:678px;top:331px;width:1px;height:1px;background:#a0a0a0;"></div>
<div style="left:687px;top:329px;width:1px;height:220px;background:#a0a0a0;"></div>
<div style="left:696px;top:331px;width:1px;height:1px;background:#a0a0a0;"></div>
<div style="left:705px;top:329px;width:1px;height:220px;background:#a0a0a0;"></div>
<div style="left:714px;top:331px;width:1px;height:1px;background:#a0a0a0;"></div>
<div style="left:261px;top:332px;width:462px;height:1px;background:#a0a0a0;"></div>
<div style="left:261px;top:363px;width:462px;height:1px;background:#a0a0a0;"></div>
<div style="left:261px;top:394px;width:462px;height:1px;background:#a0a0a0;"></div>
<div style="left:261px;top:425px;width:462px;height:1px;background:#a0a0a0;"></div>
<div style="left:261px;top:456px;width:462px;height:1px;background:#a0a0a0;"></div>
<div style="left:261px;top:487px;width:462px;height:1px;background:#a0a0a0;"></div>
<div style="left:261px;top:518px;width:462px;height:1px;background:#a0a0a0;"></div>
<div style="left:261px;top:549px;width:462px;height:1px;background:#a0a0a0;"></div>
<div class="t" style="left:277px;top:316px;width:30px;text-align:center;font-size:12px;line-height:13px;transform:scaleX(0.9)">AM</div>
<div class="t" style="left:295px;top:316px;width:30px;text-align:center;font-size:12px;line-height:13px;transform:scaleX(0.9)">1</div>
<div class="t" style="left:313px;top:316px;width:30px;text-align:center;font-size:12px;line-height:13px;transform:scaleX(0.9)">2</div>
<div class="t" style="left:331px;top:316px;width:30px;text-align:center;font-size:12px;line-height:13px;transform:scaleX(0.9)">3</div>
<div class="t" style="left:349px;top:316px;width:30px;text-align:center;font-size:12px;line-height:13px;transform:scaleX(0.9)">4</div>
<div class="t" style="left:367px;top:316px;width:30px;text-align:center;font-size:12px;line-height:13px;transform:scaleX(0.9)">5</div>
<div class="t" style="left:385px;top:316px;width:30px;text-align:center;font-size:12px;line-height:13px;transform:scaleX(0.9)">6</div>
<div class="t" style="left:403px;top:316px;width:30px;text-align:center;font-size:12px;line-height:13px;transform:scaleX(0.9)">7</div>
<div class="t" style="left:421px;top:316px;width:30px;text-align:center;font-size:12px;line-height:13px;transform:scaleX(0.9)">8</div>
<div class="t" style="left:439px;top:316px;width:30px;text-align:center;font-size:12px;line-height:13px;transform:scaleX(0.9)">9</div>
<div class="t" style="left:457px;top:316px;width:30px;text-align:center;font-size:12px;line-height:13px;transform:scaleX(0.9)">10</div>
<div class="t" style="left:475px;top:316px;width:30px;text-align:center;font-size:12px;line-height:13px;transform:scaleX(0.9)">11</div>
<div class="t" style="left:493px;top:316px;width:30px;text-align:center;font-size:12px;line-height:13px;transform:scaleX(0.9)">PM</div>
<div class="t" style="left:511px;top:316px;width:30px;text-align:center;font-size:12px;line-height:13px;transform:scaleX(0.9)">1</div>
<div class="t" style="left:529px;top:316px;width:30px;text-align:center;font-size:12px;line-height:13px;transform:scaleX(0.9)">2</div>
<div class="t" style="left:547px;top:316px;width:30px;text-align:center;font-size:12px;line-height:13px;transform:scaleX(0.9)">3</div>
<div class="t" style="left:565px;top:316px;width:30px;text-align:center;font-size:12px;line-height:13px;transform:scaleX(0.9)">4</div>
<div class="t" style="left:583px;top:316px;width:30px;text-align:center;font-size:12px;line-height:13px;transform:scaleX(0.9)">5</div>
<div class="t" style="left:601px;top:316px;width:30px;text-align:center;font-size:12px;line-height:13px;transform:scaleX(0.9)">6</div>
<div class="t" style="left:619px;top:316px;width:30px;text-align:center;font-size:12px;line-height:13px;transform:scaleX(0.9)">7</div>
<div class="t" style="left:637px;top:316px;width:30px;text-align:center;font-size:12px;line-height:13px;transform:scaleX(0.9)">8</div>
<div class="t" style="left:655px;top:316px;width:30px;text-align:center;font-size:12px;line-height:13px;transform:scaleX(0.9)">9</div>
<div class="t" style="left:673px;top:316px;width:30px;text-align:center;font-size:12px;line-height:13px;transform:scaleX(0.9)">10</div>
<div class="t" style="left:691px;top:316px;width:30px;text-align:center;font-size:12px;line-height:13px;transform:scaleX(0.9)">11</div>
<div class="t" style="left:250px;top:343px;width:39px;text-align:right;font-size:12px;line-height:13px;transform:scaleX(0.99);transform-origin:right center">Sun</div>
<div class="t" style="left:250px;top:374px;width:39px;text-align:right;font-size:12px;line-height:13px;transform:scaleX(0.99);transform-origin:right center">Mon</div>
<div class="t" style="left:250px;top:405px;width:39px;text-align:right;font-size:12px;line-height:13px;transform:scaleX(0.99);transform-origin:right center">Tue</div>
<div class="t" style="left:250px;top:436px;width:39px;text-align:right;font-size:12px;line-height:13px;transform:scaleX(0.99);transform-origin:right center">Wed</div>
<div class="t" style="left:250px;top:467px;width:39px;text-align:right;font-size:12px;line-height:13px;transform:scaleX(0.99);transform-origin:right center">Thu</div>
<div class="t" style="left:250px;top:498px;width:39px;text-align:right;font-size:12px;line-height:13px;transform:scaleX(0.99);transform-origin:right center">Fri</div>
<div class="t" style="left:250px;top:529px;width:39px;text-align:right;font-size:12px;line-height:13px;transform:scaleX(0.99);transform-origin:right center">Sat</div>
<div style="left:376px;top:556px;width:72px;height:25px;border-top:2px solid #716f64;border-left:2px solid #716f64;border-right:1px solid #fff;border-bottom:1px solid #fff;box-sizing:border-box"></div>
<div style="left:380px;top:560px;width:17px;height:17px;background:#ffffff;border-top:1px solid #716f64;border-left:1px solid #716f64;border-right:1px solid #f1efe2;border-bottom:1px solid #f1efe2;box-sizing:border-box"></div>
<div class="t" style="left:393px;top:563px;width:60px;text-align:center;font-size:12px;line-height:13px;transform:scaleX(0.89)">Closed</div>
<div style="left:460px;top:560px;width:17px;height:17px;background:#00ffff;border-top:1px solid #fff;border-left:1px solid #fff;border-right:1px solid #716f64;border-bottom:1px solid #716f64;box-sizing:border-box"></div>
<div class="t" style="left:473px;top:563px;width:60px;text-align:center;font-size:12px;line-height:13px;transform:scaleX(0.89)">Before</div>
<div style="left:540px;top:560px;width:17px;height:17px;background:#0000ff;border-top:1px solid #fff;border-left:1px solid #fff;border-right:1px solid #716f64;border-bottom:1px solid #716f64;box-sizing:border-box"></div>
<div class="t" style="left:553px;top:563px;width:60px;text-align:center;font-size:12px;line-height:13px;transform:scaleX(0.89)">Regular</div>
<div style="left:620px;top:560px;width:17px;height:17px;background:#000080;border-top:1px solid #fff;border-left:1px solid #fff;border-right:1px solid #716f64;border-bottom:1px solid #716f64;box-sizing:border-box"></div>
<div class="t" style="left:633px;top:563px;width:60px;text-align:center;font-size:12px;line-height:13px;transform:scaleX(0.89)">After</div>
<div style="left:4px;top:603px;width:742px;height:1px;background:#000000;"></div>
<div style="left:4px;top:623px;width:742px;height:1px;background:#000000;"></div>
<div style="left:4px;top:604px;width:742px;height:19px;background:#f1f1ec;"></div>
<div style="left:4px;top:604px;width:76px;height:19px;background:#e8e8f4;"></div>
<div style="left:22px;top:604px;width:1px;height:19px;background:#c8c8dc;"></div>
<div style="left:41px;top:604px;width:1px;height:19px;background:#c8c8dc;"></div>
<div style="left:60px;top:604px;width:1px;height:19px;background:#c8c8dc;"></div>
<div style="left:80px;top:604px;width:1px;height:19px;background:#000000;"></div>
<svg style="position:absolute;left:4px;top:604px" width="76" height="19" viewBox="0 0 76 19" shape-rendering="crispEdges">
<rect x="6" y="5" width="1" height="9" fill="#555"/><path d="M13 5 v9 l-5 -4.5 z" fill="#555"/>
<path d="M31 5 v9 l-5 -4.5 z" fill="#555"/>
<path d="M45 5 v9 l5 -4.5 z" fill="#555"/>
<path d="M63 5 v9 l5 -4.5 z" fill="#555"/><rect x="69" y="5" width="1" height="9" fill="#555"/></svg>
<div style="left:81px;top:604px;width:89px;height:19px;background:linear-gradient(#dcdcee 0px,#c8c8dc 3px,#c8c8dc 9px,#ffffff 10px,#ffffff 19px);border-left:1px solid #fff;border-right:2px solid #d8d8ea;box-sizing:border-box"></div>
<div class="t" style="left:81px;top:608px;width:89px;text-align:center;font-size:12px;line-height:13px;transform:scaleX(0.89)">Object Manager</div>
<div style="left:171px;top:604px;width:68px;height:19px;background:linear-gradient(#ffffff 0px,#ffffff 4px,#e4e4f0 9px,#c8c8dc 16px,#d8d8ea 19px);border-left:1px solid #fff;border-right:2px solid #d8d8ea;box-sizing:border-box"></div>
<div class="t" style="left:171px;top:608px;width:68px;text-align:center;font-size:12px;line-height:13px;transform:scaleX(0.89)">Mixed Cells</div>
<div style="left:240px;top:604px;width:83px;height:19px;background:linear-gradient(#ffffff 0px,#ffffff 4px,#e4e4f0 9px,#c8c8dc 16px,#d8d8ea 19px);border-left:1px solid #fff;border-right:2px solid #d8d8ea;box-sizing:border-box"></div>
<div class="t" style="left:240px;top:608px;width:83px;text-align:center;font-size:12px;line-height:13px;transform:scaleX(0.89)">Multiple Blocks</div>
<div style="left:324px;top:604px;width:14px;height:19px;background:linear-gradient(#ffffff 0px,#ffffff 4px,#e4e4f0 9px,#c8c8dc 16px,#d8d8ea 19px);border-left:1px solid #fff;border-right:2px solid #d8d8ea;box-sizing:border-box"></div>
<div class="t" style="left:324px;top:608px;width:14px;text-align:center;font-size:12px;line-height:13px;transform:scaleX(0.89)">4</div>
<div style="left:339px;top:604px;width:14px;height:19px;background:linear-gradient(#ffffff 0px,#ffffff 4px,#e4e4f0 9px,#c8c8dc 16px,#d8d8ea 19px);border-left:1px solid #fff;border-right:2px solid #d8d8ea;box-sizing:border-box"></div>
<div class="t" style="left:339px;top:608px;width:14px;text-align:center;font-size:12px;line-height:13px;transform:scaleX(0.89)">5</div>
<div style="left:354px;top:604px;width:14px;height:19px;background:linear-gradient(#ffffff 0px,#ffffff 4px,#e4e4f0 9px,#c8c8dc 16px,#d8d8ea 19px);border-left:1px solid #fff;border-right:2px solid #d8d8ea;box-sizing:border-box"></div>
<div class="t" style="left:354px;top:608px;width:14px;text-align:center;font-size:12px;line-height:13px;transform:scaleX(0.89)">6</div>
<div style="left:369px;top:604px;width:15px;height:19px;background:linear-gradient(#ffffff 0px,#ffffff 4px,#e4e4f0 9px,#c8c8dc 16px,#d8d8ea 19px);border-left:1px solid #fff;border-right:2px solid #d8d8ea;box-sizing:border-box"></div>
<div class="t" style="left:369px;top:608px;width:15px;text-align:center;font-size:12px;line-height:13px;transform:scaleX(0.89)">7</div>
<div style="left:4px;top:624px;width:742px;height:22px;background:linear-gradient(#ffffff 0px,#ffffff 1px,#b0b0b8 1px,#b0b0b8 2px,#e0e0e4 2px,#e2e2e6 12px,#d4d4d8 20px,#e6e6ea 21px);"></div>
<div style="left:742px;top:634px;width:2px;height:2px;background:#ffffff;"></div>
<div style="left:741px;top:633px;width:2px;height:2px;background:#a0a0b0;"></div>
<div style="left:738px;top:638px;width:2px;height:2px;background:#ffffff;"></div>
<div style="left:737px;top:637px;width:2px;height:2px;background:#a0a0b0;"></div>
<div style="left:742px;top:638px;width:2px;height:2px;background:#ffffff;"></div>
<div style="left:741px;top:637px;width:2px;height:2px;background:#a0a0b0;"></div>
<div style="left:734px;top:642px;width:2px;height:2px;background:#ffffff;"></div>
<div style="left:733px;top:641px;width:2px;height:2px;background:#a0a0b0;"></div>
<div style="left:738px;top:642px;width:2px;height:2px;background:#ffffff;"></div>
<div style="left:737px;top:641px;width:2px;height:2px;background:#a0a0b0;"></div>
<div style="left:742px;top:642px;width:2px;height:2px;background:#ffffff;"></div>
<div style="left:741px;top:641px;width:2px;height:2px;background:#a0a0b0;"></div>
</div></body></html>
